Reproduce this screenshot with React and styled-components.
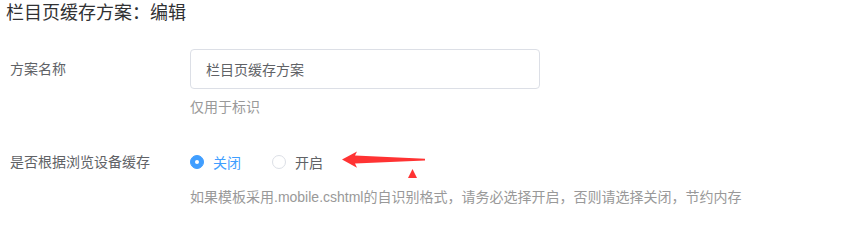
import React from "react";
import styled, { createGlobalStyle } from "styled-components";

const Global = createGlobalStyle`
  html, body { margin: 0; padding: 0; background: #fff; }
  body { font-family: "Liberation Sans", "Noto Sans CJK SC", sans-serif; }
`;

const Page = styled.div`
  position: relative;
  width: 842px;
  height: 224px;
  overflow: hidden;
`;

const Title = styled.h1`
  margin: 0;
  padding-left: 6px;
  font-size: 18px;
  font-weight: 400;
  line-height: 26px;
  color: #303133;
`;

const Form = styled.div`
  margin-top: 23px;
  padding-left: 10px;
  display: flex;
  flex-direction: column;
  gap: ${(p) => p.$gap}px;
`;

const Item = styled.div`
  display: flex;
  align-items: flex-start;
`;

const Label = styled.label`
  width: 180px;
  flex: none;
  font-size: 14px;
  line-height: 40px;
  color: #606266;
`;

const Content = styled.div`
  display: flex;
  flex-direction: column;
`;

const Input = styled.input`
  box-sizing: border-box;
  width: 350px;
  height: 40px;
  padding: 0 15px;
  border: 1px solid #dcdfe6;
  border-radius: 4px;
  font-family: inherit;
  font-size: 14px;
  color: #606266;
  outline: none;
`;

const Help = styled.div`
  margin-top: ${(p) => p.$top}px;
  font-size: 14px;
  line-height: 20px;
  color: #999;
  white-space: nowrap;
`;

const RadioGroup = styled.div`
  display: flex;
  align-items: center;
  height: 40px;
  gap: 31px;
`;

const Radio = styled.label`
  display: flex;
  align-items: center;
  gap: 9px;
  font-size: 14px;
  color: ${(p) => (p.$checked ? "#409eff" : "#606266")};
  cursor: pointer;
`;

const Dot = styled.span`
  box-sizing: border-box;
  width: 14px;
  height: 14px;
  border-radius: 50%;
  border: 1px solid ${(p) => (p.$checked ? "#409eff" : "#dcdfe6")};
  background: ${(p) => (p.$checked ? "#409eff" : "#fff")};
  display: flex;
  align-items: center;
  justify-content: center;
  &::after {
    content: "";
    width: 4px;
    height: 4px;
    border-radius: 50%;
    background: #fff;
    display: ${(p) => (p.$checked ? "block" : "none")};
  }
`;

const Annotation = styled.svg`
  position: absolute;
  left: 340px;
  top: 148px;
`;

export default function App() {
  return (
    <Page>
      <Global />
      <Title>栏目页缓存方案：编辑</Title>
      <Form $gap={25}>
        <Item>
          <Label>方案名称</Label>
          <Content>
            <Input defaultValue="栏目页缓存方案" />
            <Help $top={8}>仅用于标识</Help>
          </Content>
        </Item>
        <Item>
          <Label>是否根据浏览设备缓存</Label>
          <Content>
            <RadioGroup>
              <Radio $checked>
                <Dot $checked />
                关闭
              </Radio>
              <Radio>
                <Dot />
                开启
              </Radio>
            </RadioGroup>
            <Help $top={5}>
              如果模板采用.mobile.cshtml的自识别格式，请务必选择开启，否则请选择关闭，节约内存
            </Help>
          </Content>
        </Item>
      </Form>
      <Annotation width="90" height="34" viewBox="0 0 90 34">
        <polygon
          points="2,11.5 17,3.5 15,7.5 85,10.8 85,12.6 15,15.5 17,19.8"
          fill="#f33"
        />
        <polygon points="68,30 72.5,21 77,30" fill="#f33" />
      </Annotation>
    </Page>
  );
}
